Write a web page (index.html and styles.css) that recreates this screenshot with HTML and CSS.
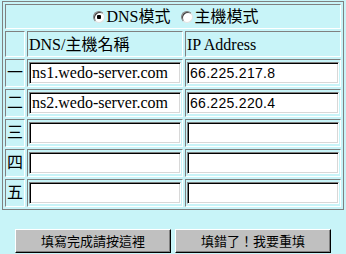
FILE: index.html
```html
<!DOCTYPE html>
<html lang="zh-Hant">
<head>
    <meta charset="UTF-8">
    <title>DNS 設定</title>
    <link rel="stylesheet" href="styles.css">
</head>
<body>
    <form class="dns-form">
        <table class="dns-table">
            <colgroup>
                <col class="col-no">
                <col class="col-host">
                <col class="col-ip">
            </colgroup>
            <tr class="mode-row">
                <td colspan="3">
                    <label class="mode"><input type="radio" name="mode" checked>DNS模式</label>
                    <label class="mode"><input type="radio" name="mode">主機模式</label>
                </td>
            </tr>
            <tr class="head-row">
                <td></td>
                <td>DNS/主機名稱</td>
                <td>IP Address</td>
            </tr>
            <tr class="data-row">
                <td class="no">一</td>
                <td><input type="text" class="host" value="ns1.wedo-server.com"></td>
                <td><input type="text" class="ip" value="66.225.217.8"></td>
            </tr>
            <tr class="data-row">
                <td class="no">二</td>
                <td><input type="text" class="host" value="ns2.wedo-server.com"></td>
                <td><input type="text" class="ip" value="66.225.220.4"></td>
            </tr>
            <tr class="data-row">
                <td class="no">三</td>
                <td><input type="text" class="host"></td>
                <td><input type="text" class="ip"></td>
            </tr>
            <tr class="data-row">
                <td class="no">四</td>
                <td><input type="text" class="host"></td>
                <td><input type="text" class="ip"></td>
            </tr>
            <tr class="data-row">
                <td class="no">五</td>
                <td><input type="text" class="host"></td>
                <td><input type="text" class="ip"></td>
            </tr>
        </table>

        <div class="actions">
            <button type="submit">填寫完成請按這裡</button>
            <button type="reset">填錯了！我要重填</button>
        </div>
    </form>
</body>
</html>
```

FILE: styles.css
```css
body {
    margin: 0;
    padding: 1px 2px;
    background-color: #c8f4f8;
    font-family: "Liberation Serif", "Noto Sans CJK TC", serif;
    font-size: 16px;
    color: #000;
}
.dns-table {
    width: 342px;
    table-layout: fixed;
    border-collapse: separate;
    border-spacing: 2px;
    border: 1px solid #808080;
}
.col-no {
    width: 20px;
}
.col-host,
.col-ip {
    width: 156px;
}
.dns-table td {
    border: 1px solid;
    border-color: #808080 #fff #fff #808080;
    padding: 0 1px;
    line-height: 18px;
    vertical-align: middle;
    white-space: nowrap;
}
.mode-row td {
    height: 25px;
    box-sizing: border-box;
    text-align: center;
    padding-left: 6px;
    padding-top: 1px;
}
.head-row td {
    height: 26px;
    box-sizing: border-box;
    padding-top: 2px;
}
.data-row td {
    height: 28px;
    box-sizing: border-box;
}
.dns-table td.no {
    text-align: center;
    padding: 0;
}
.mode {
    display: inline-flex;
    align-items: center;
    margin: 0 3px;
}
.mode input {
    appearance: none;
    -webkit-appearance: none;
    width: 12px;
    height: 12px;
    margin: 0 2px 0 0;
    border: 1px solid;
    border-color: #808080 #e4e4e4 #e4e4e4 #808080;
    border-radius: 50%;
    background-color: #fff;
    box-shadow: inset 1px 1px 0 #404040;
}
.mode input:checked {
    background: radial-gradient(circle, #000 0 2px, #fff 2.5px);
}
.dns-table input[type="text"] {
    display: block;
    box-sizing: border-box;
    width: 152px;
    height: 22px;
    margin: 0;
    padding: 0 2px;
    border: 1px solid;
    border-color: #808080 #fff #fff #808080;
    box-shadow: inset 1px 1px 0 #000, inset -1px -1px 0 #d8d8d8;
    background-color: #fff;
    color: #000;
    outline: none;
}
.dns-table input.host {
    font-family: "Liberation Serif", serif;
    font-size: 16px;
}
.dns-table input.ip {
    font-family: "Liberation Sans", sans-serif;
    font-size: 14px;
    letter-spacing: 0.3px;
}
.actions {
    display: flex;
    justify-content: center;
    gap: 4px;
    margin-top: 19px;
}
.actions button {
    width: 156px;
    height: 24px;
    padding: 0 0 2px;
    background-color: #c0c0c0;
    border: 1px solid;
    border-color: #fff #000 #000 #fff;
    box-shadow: inset -1px -1px 0 #808080;
    font-family: "Noto Sans CJK TC", sans-serif;
    font-size: 13px;
    color: #000;
}
```
